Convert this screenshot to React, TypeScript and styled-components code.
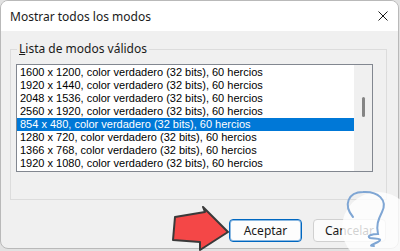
import React from 'react';
import styled, { createGlobalStyle } from 'styled-components';

const GlobalStyle = createGlobalStyle`
  *, *::before, *::after {
    box-sizing: border-box;
  }
  html, body {
    margin: 0;
    padding: 0;
    background: #e2e2e2;
  }
  #root {
    width: 400px;
    height: 251px;
    overflow: hidden;
  }
`;

const modes = [
  '1600 x 1200, color verdadero (32 bits), 60 hercios',
  '1920 x 1440, color verdadero (32 bits), 60 hercios',
  '2048 x 1536, color verdadero (32 bits), 60 hercios',
  '2560 x 1920, color verdadero (32 bits), 60 hercios',
  '854 x 480, color verdadero (32 bits), 60 hercios',
  '1280 x 720, color verdadero (32 bits), 60 hercios',
  '1366 x 768, color verdadero (32 bits), 60 hercios',
  '1920 x 1080, color verdadero (32 bits), 60 hercios',
];

const Stage = styled.div`
  position: relative;
  width: 400px;
  height: 251px;
`;

const Dialog = styled.div`
  width: 399px;
  height: 249px;
  border: 1px solid #b9b9b9;
  border-radius: 8px;
  overflow: hidden;
  background: #f0f0f0;
  display: flex;
  flex-direction: column;
  font-family: 'Noto Sans', 'Open Sans', sans-serif;
  color: #1a1a1a;
`;

const TitleBar = styled.div`
  height: 30px;
  flex: none;
  background: #ffffff;
  display: flex;
  align-items: center;
  justify-content: space-between;
  padding: 0 9px 0 9px;
  font-size: 12px;
`;

const CloseIcon = styled.svg`
  width: 10px;
  height: 10px;
  margin-right: 1px;
`;

const Body = styled.div`
  flex: 1;
  display: flex;
  flex-direction: column;
  padding: 18px 11px 0 9px;
`;

const GroupBox = styled.div`
  position: relative;
  height: 151px;
  border: 1px solid #dcdcdc;
  padding: 14px 13px 0 5px;
`;

const Legend = styled.span`
  position: absolute;
  top: -9px;
  left: 6px;
  padding: 0 2px;
  background: #f0f0f0;
  font-size: 12px;
  line-height: 16px;
`;

const Accel = styled.span`
  text-decoration: underline;
`;

const ListBox = styled.div`
  height: 108px;
  border: 1px solid #828790;
  background: #ffffff;
  display: flex;
`;

const Rows = styled.div`
  flex: 1;
  padding-top: 1px;
`;

const Row = styled.div<{ $selected?: boolean }>`
  height: 13px;
  line-height: 13px;
  padding-left: 3px;
  font-family: 'Liberation Sans', Arial, sans-serif;
  font-size: 11px;
  white-space: nowrap;
  background: ${p => (p.$selected ? '#0078d7' : 'transparent')};
  color: ${p => (p.$selected ? '#ffffff' : '#000000')};
`;

const ScrollTrack = styled.div`
  width: 18px;
  background: #f0f0f0;
  display: flex;
  justify-content: center;
  padding-top: 32px;
`;

const ScrollThumb = styled.div`
  width: 3px;
  height: 20px;
  border-radius: 2px;
  background: #858585;
  margin-left: 1px;
`;

const ButtonRow = styled.div`
  display: flex;
  justify-content: flex-end;
  gap: 11px;
  margin-top: 19px;
  padding-right: 1px;
`;

const Button = styled.button<{ $primary?: boolean }>`
  width: 73px;
  height: 23px;
  border-radius: 4px;
  font-family: 'Noto Sans', 'Open Sans', sans-serif;
  font-size: 12px;
  color: #1a1a1a;
  padding: 0;
  background: ${p => (p.$primary ? '#fdfdfd' : '#fbfbfb')};
  border: 1px solid ${p => (p.$primary ? '#0067c0' : '#d0d0d0')};
  box-shadow: ${p => (p.$primary ? 'inset 0 0 0 1px rgba(0, 103, 192, 0.45)' : 'none')};
`;

const Overlay = styled.svg`
  position: absolute;
  left: 0;
  top: 0;
  pointer-events: none;
`;

export default function App() {
  return (
    <Stage>
      <GlobalStyle />
      <Dialog>
        <TitleBar>
          <span>Mostrar todos los modos</span>
          <CloseIcon viewBox="0 0 10 10">
            <path d="M0.5 0.5 L9.5 9.5 M9.5 0.5 L0.5 9.5" stroke="#1a1a1a" strokeWidth="1" fill="none" />
          </CloseIcon>
        </TitleBar>
        <Body>
          <GroupBox>
            <Legend>
              <Accel>L</Accel>ista de modos válidos
            </Legend>
            <ListBox>
              <Rows>
                {modes.map((m, i) => (
                  <Row key={m} $selected={i === 4}>
                    {m}
                  </Row>
                ))}
              </Rows>
              <ScrollTrack>
                <ScrollThumb />
              </ScrollTrack>
            </ListBox>
          </GroupBox>
          <ButtonRow>
            <Button $primary>Aceptar</Button>
            <Button>Cancelar</Button>
          </ButtonRow>
        </Body>
      </Dialog>
      <Overlay width="400" height="251" viewBox="0 0 400 251">
        <polygon
          points="175,217 205,212 203,207 228,232 200,250 200,242 173,240"
          fill="#f44747"
          stroke="#3a3a3a"
          strokeWidth="2"
          strokeLinejoin="round"
        />
        <circle cx="378" cy="228" r="36" fill="rgba(255,255,255,0.8)" />
        <path
          d="M353,217 C343,205 348,192 363,192 C378,191 388,200 382,212 C378,220 376,226 378,234 C372,234 366,236 370,238 C376,239 384,238 378,242 C372,245 368,246 374,246"
          fill="none"
          stroke="#7fa6d4"
          strokeWidth="2"
          strokeLinecap="round"
        />
      </Overlay>
    </Stage>
  );
}
